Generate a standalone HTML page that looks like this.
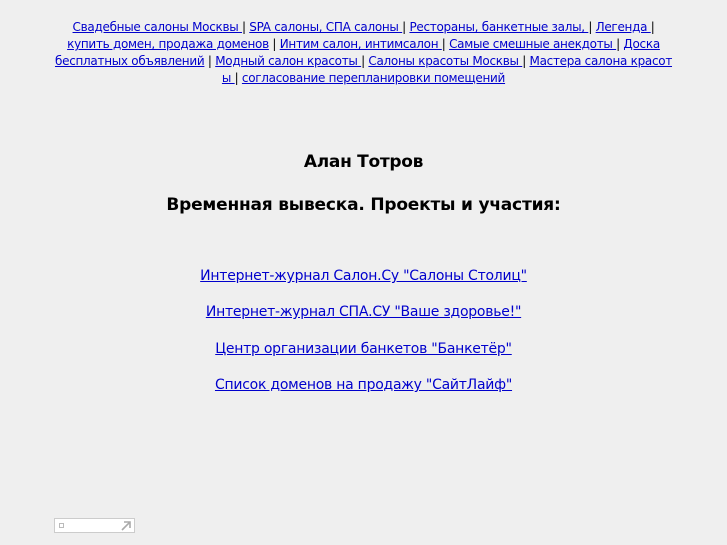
<!DOCTYPE html>
<html><head><meta charset="utf-8"><style>
body{margin:0;background:#efefef;font-family:"DejaVu Sans","Liberation Sans",sans-serif;color:#000;width:727px;height:545px;overflow:hidden;position:relative}
a{color:#0000cc;text-decoration:underline}
.top{position:absolute;left:0;width:727px;top:19px;text-align:center;font-size:12px;line-height:17px;white-space:nowrap;letter-spacing:-0.29px}
h1{position:absolute;top:152px;left:0;width:727px;text-align:center;font-size:17px;margin:0;font-weight:bold;letter-spacing:-0.3px}
h2{position:absolute;top:195px;left:0;width:727px;text-align:center;font-size:17px;margin:0;font-weight:bold;letter-spacing:-0.2px}
.l{position:absolute;left:0;width:727px;text-align:center;font-size:14px;letter-spacing:-0.25px}
.box{position:absolute;left:54px;top:518px;width:81px;height:15px;background:#fff;border:1px solid #ccc;box-sizing:border-box}
</style></head><body>
<div class="top">
<a>Свадебные салоны Москвы </a> | <a>SPA салоны, СПА салоны </a> | <a>Рестораны, банкетные залы, </a>| <a>Легенда </a> |<br>
<a>купить домен, продажа доменов</a> | <a>Интим салон, интимсалон </a> | <a>Самые смешные анекдоты </a> | <a>Доска</a><br>
<a>бесплатных объявлений</a> | <a>Модный салон красоты </a> | <a>Салоны красоты Москвы </a> | <a>Мастера салона красот</a><br>
<a>ы </a> | <a>согласование перепланировки помещений</a>
</div>
<h1>Алан Тотров</h1>
<h2>Временная вывеска. Проекты и участия:</h2>
<div class="l" style="top:268px"><a>Интернет-журнал Салон.Су "Салоны Столиц"</a></div>
<div class="l" style="top:304px"><a>Интернет-журнал СПА.СУ "Ваше здоровье!"</a></div>
<div class="l" style="top:341px"><a>Центр организации банкетов "Банкетёр"</a></div>
<div class="l" style="top:377px"><a>Список доменов на продажу "СайтЛайф"</a></div>
<div class="box"><div style="position:absolute;left:4px;top:4px;width:3px;height:3px;border:1px solid #bbb"></div>
<svg style="position:absolute;right:2px;top:1px" width="11" height="11"><path d="M1 10L9 2M3 2H9V8" stroke="#aaa" stroke-width="1.6" fill="none"/></svg></div>
</body></html>
